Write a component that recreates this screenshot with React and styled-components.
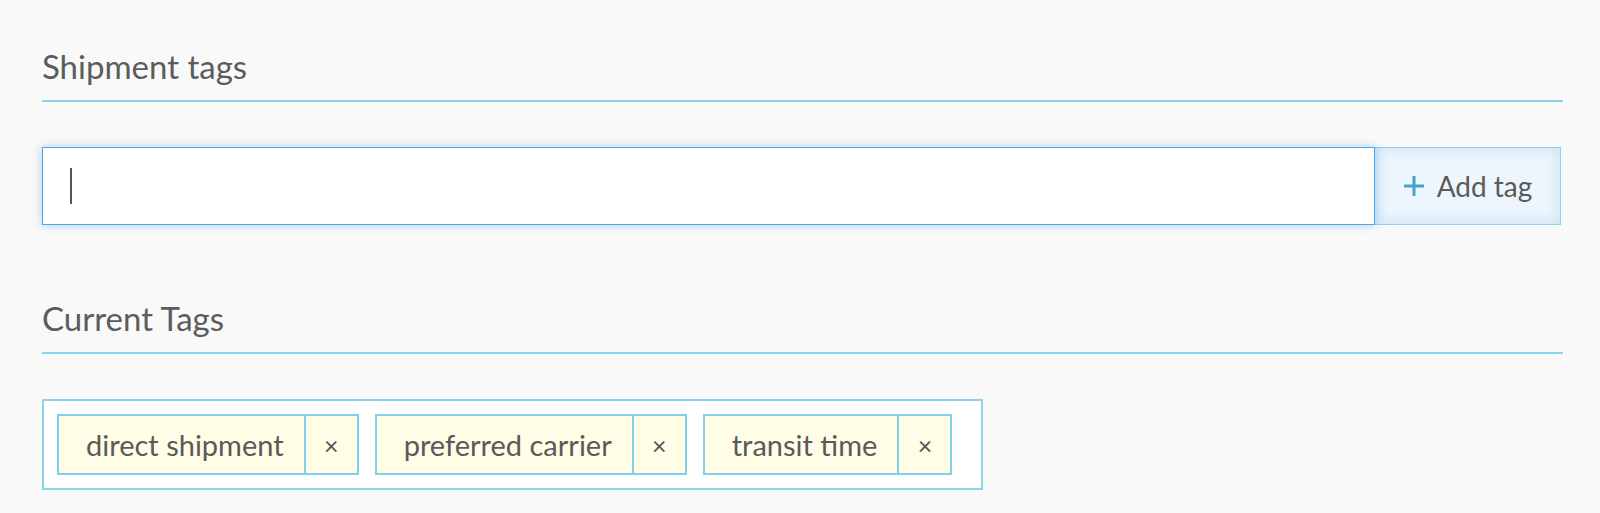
import React from 'react';
import styled, { createGlobalStyle } from 'styled-components';

const GlobalStyle = createGlobalStyle`
  html, body {
    margin: 0;
    padding: 0;
    background: #f9f9f9;
  }
  body {
    font-family: Lato, 'Open Sans', sans-serif;
    color: #595959;
  }
`;

const Page = styled.div`
  padding: 46px 37px 0 42px;
`;

const Section = styled.section`
  margin-bottom: 73px;

  &:last-child {
    margin-bottom: 0;
  }
`;

const SectionTitle = styled.h2`
  margin: 0 0 45px;
  padding-bottom: 14px;
  font-size: 33px;
  font-weight: 400;
  line-height: 40px;
  color: #5c5c5c;
  border-bottom: 2px solid #8ad3ec;
`;

const AddRow = styled.div`
  display: flex;
  align-items: stretch;
  height: 78px;
  margin-right: 2px;
`;

const TextField = styled.div`
  flex: 1;
  display: flex;
  align-items: center;
  padding-left: 27px;
  background: #fff;
  border: 1px solid #4ea7ea;
  box-shadow: 0 0 9px rgba(78, 160, 230, 0.45);
  position: relative;
  z-index: 1;
`;

const Caret = styled.span`
  display: block;
  width: 2px;
  height: 36px;
  background: #555;
`;

const AddButton = styled.button`
  display: flex;
  align-items: center;
  justify-content: center;
  gap: 12px;
  width: 186px;
  padding: 0;
  font-family: inherit;
  font-size: 28px;
  color: #5a5a5a;
  background: #edf6fd;
  border: 1px solid #8ad6f0;
  border-left: none;
  box-shadow: inset 0 0 16px rgba(185, 215, 238, 0.7);
  cursor: pointer;
`;

const TagList = styled.div`
  display: inline-flex;
  padding: 13px;
  background: #fff;
  border: 2px solid #8ad4ee;
`;

const Tag = styled.div`
  display: flex;
  height: 61px;
  margin-right: 16px;
  background: #fffde6;
  border: 2px solid #82d0ec;
  box-sizing: border-box;
  font-size: 29px;
  color: #5a5a5a;
`;

const TagLabel = styled.span`
  display: flex;
  align-items: center;
  padding: 0 20px 0 27px;
`;

const RemoveButton = styled.span`
  display: flex;
  align-items: center;
  justify-content: center;
  width: 51px;
  border-left: 2px solid #82d0ec;
  font-size: 25px;
  color: #555;
  cursor: pointer;
`;

function PlusIcon() {
  return (
    <svg width="22" height="22" viewBox="0 0 22 22" aria-hidden="true">
      <path d="M11 1v20M1 11h20" stroke="#4d9fcb" strokeWidth="3" fill="none" />
    </svg>
  );
}

const tags = ['direct shipment', 'preferred carrier', 'transit time'];

export default function App() {
  return (
    <>
      <GlobalStyle />
      <Page>
        <Section>
          <SectionTitle>Shipment tags</SectionTitle>
          <AddRow>
            <TextField role="textbox" aria-label="New tag">
              <Caret />
            </TextField>
            <AddButton type="button">
              <PlusIcon />
              Add tag
            </AddButton>
          </AddRow>
        </Section>
        <Section>
          <SectionTitle>Current Tags</SectionTitle>
          <TagList>
            {tags.map(tag => (
              <Tag key={tag}>
                <TagLabel>{tag}</TagLabel>
                <RemoveButton>×</RemoveButton>
              </Tag>
            ))}
          </TagList>
        </Section>
      </Page>
    </>
  );
}
